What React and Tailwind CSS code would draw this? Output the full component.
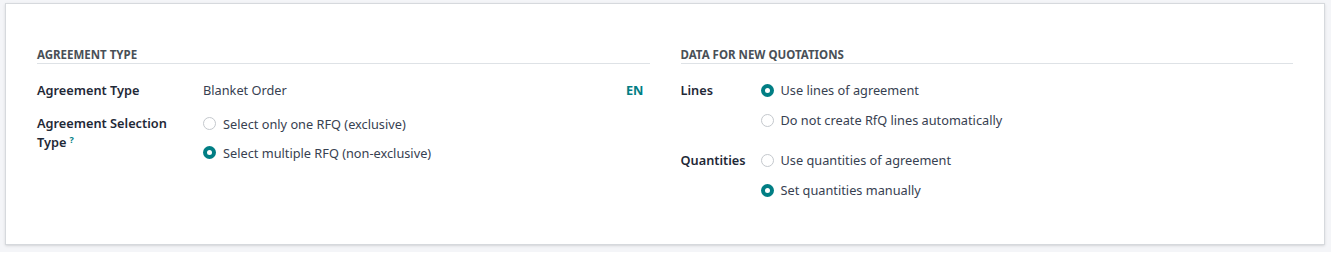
const Radio = ({ checked, label, tight }) => (
  <div className={`flex items-center ${tight ? 'h-[29px]' : 'h-[30px]'}`}>
    {checked ? (
      <span className="w-[13px] h-[13px] rounded-full bg-[#017e84] flex items-center justify-center shrink-0">
        <span className="w-[5px] h-[5px] rounded-full bg-white" />
      </span>
    ) : (
      <span className="w-[13px] h-[13px] rounded-full border border-[#c4c8cd] bg-white shrink-0" />
    )}
    <span className="ml-[7px] text-[12.75px] leading-[20px] text-[#374151]">{label}</span>
  </div>
);

const SectionTitle = ({ children }) => (
  <div className="text-[11.5px] leading-[16px] font-bold uppercase text-[#495057] pt-[1px] border-b border-[#dee2e6]">
    {children}
  </div>
);

export default function App() {
  return (
    <div className="bg-[#f4f5f8] pt-[3px] pl-[5px] pr-[6px] pb-[7px] font-['Noto_Sans',sans-serif]">
      <div className="bg-white border border-[#d6d9dd] shadow-sm pt-[42px] pb-[39px] px-[31px]">
        <div className="grid grid-cols-2 gap-x-[31px]">
          {/* Agreement type */}
          <div>
            <SectionTitle>Agreement Type</SectionTitle>
            <div className="flex mt-[16px]">
              <div className="w-[166px] shrink-0 text-[12.75px] leading-[20px] font-semibold text-[#1f2937]">
                Agreement Type
              </div>
              <div className="flex-1 flex justify-between text-[12.75px] leading-[20px] text-[#374151]">
                <span>Blanket Order</span>
                <span className="font-bold text-[#017e84] pr-[6px]">EN</span>
              </div>
            </div>
            <div className="flex mt-[9px]">
              <div className="w-[166px] shrink-0 pt-[5px] text-[12.75px] leading-[19px] font-semibold text-[#1f2937]">
                Agreement Selection
                <br />
                Type
                <sup className="ml-[3px] text-[9px] font-bold text-[#017e84]">?</sup>
              </div>
              <div className="flex-1">
                <Radio tight label="Select only one RFQ (exclusive)" />
                <Radio tight checked label="Select multiple RFQ (non-exclusive)" />
              </div>
            </div>
          </div>

          {/* Data for new quotations */}
          <div>
            <SectionTitle>Data for New Quotations</SectionTitle>
            <div className="flex mt-[11px]">
              <div className="w-[80px] shrink-0 pt-[5px] text-[12.75px] leading-[20px] font-semibold text-[#1f2937]">
                Lines
              </div>
              <div>
                <Radio checked label="Use lines of agreement" />
                <Radio label="Do not create RfQ lines automatically" />
              </div>
            </div>
            <div className="flex mt-[10px]">
              <div className="w-[80px] shrink-0 pt-[5px] text-[12.75px] leading-[20px] font-semibold text-[#1f2937]">
                Quantities
              </div>
              <div>
                <Radio label="Use quantities of agreement" />
                <Radio checked label="Set quantities manually" />
              </div>
            </div>
          </div>
        </div>
      </div>
    </div>
  );
}
